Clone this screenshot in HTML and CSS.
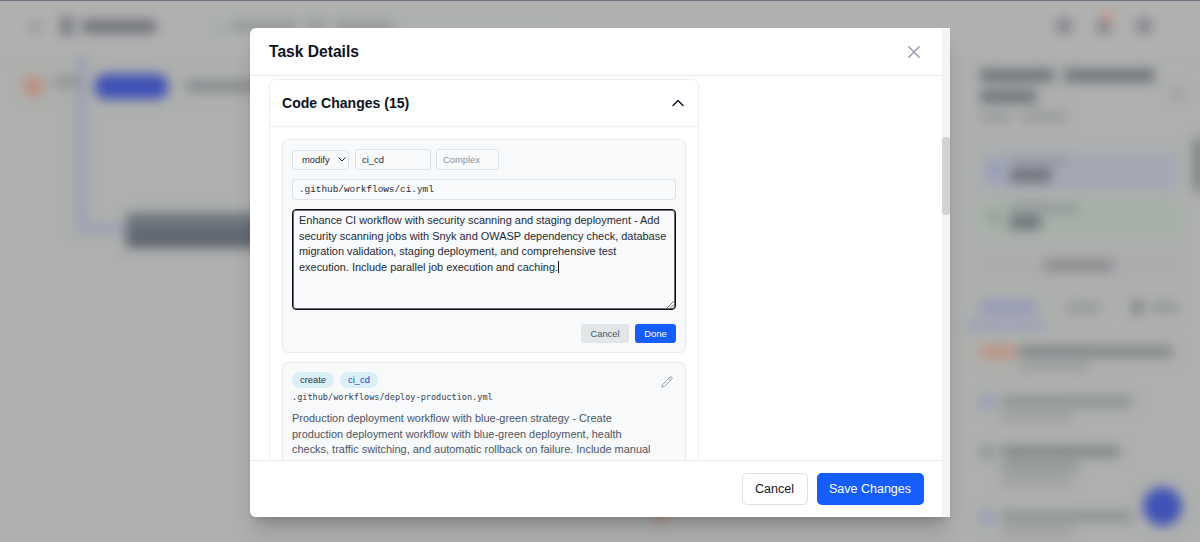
FILE: index.html
```html
<!DOCTYPE html>
<html lang="en">
<head>
<meta charset="utf-8">
<title>Task Details</title>
<link rel="stylesheet" href="styles.css">
</head>
<body>
<div class="screen">
  <div class="app" aria-hidden="true">
    <header class="topbar">
      <i class="bar menu"></i><i class="bar logo"></i><i class="bar wordmark"></i>
      <div class="search"><i class="bar lens"></i><i class="bar q1"></i><i class="bar q2"></i><i class="bar q3"></i></div>
      <div class="top-actions"><i class="bar round"></i><i class="bar bell"><b class="dot"></b></i><i class="bar round"></i></div>
    </header>
    <div class="workspace">
      <div class="canvas">
        <i class="edge edge-v"></i><i class="edge edge-h"></i><i class="node"></i><i class="ember"></i>
        <div class="toolbar"><i class="status"></i><i class="bar tool-a"></i><i class="pill-btn"></i><i class="bar tool-b"></i></div>
      </div>
      <aside class="sidebar">
        <div class="side-head">
          <div class="side-title"><div class="row"><i class="bar t1"></i><i class="bar t2"></i></div><i class="bar t3"></i><div class="row"><i class="bar t4"></i><i class="bar t5"></i></div></div>
          <i class="bar side-x"></i>
        </div>
        <div class="stat blue"><i class="spot"></i><div><i class="bar s1"></i><i class="bar s2"></i></div></div>
        <div class="stat green"><i class="spot"></i><div><i class="bar s3"></i><i class="bar s4"></i></div></div>
        <div class="side-btn"><i class="bar"></i></div>
        <div class="tabs"><i class="tab-on"></i><i class="bar tab-2"></i><i class="bar tab-3"></i><i class="bar tab-4"></i></div>
        <i class="underline"></i>
        <div class="item"><i class="mark orange"></i><div><i class="bar l1 w160"></i><i class="bar l2"></i></div></div>
        <div class="item"><i class="mark indigo"></i><div><i class="bar l1 w120"></i><i class="bar l2"></i></div></div>
        <div class="item tall"><i class="mark moss"></i><div><i class="bar l1 w115"></i><i class="bar l3"></i><i class="bar l2"></i></div></div>
        <div class="item"><i class="mark indigo"></i><div><i class="bar l1 w120"></i><i class="bar l2"></i></div></div>
      </aside>
    </div>
    <i class="side-thumb"></i><i class="fab"></i>
  </div>

  <section class="modal" role="dialog" aria-label="Task Details">
    <div class="main">
      <header class="modal-head">
        <h2>Task Details</h2>
        <svg class="close" viewBox="0 0 12 12"><path d="M.8.8l10.4 10.4M11.2.8L.8 11.2"/></svg>
      </header>
      <div class="modal-body">
        <section class="panel">
          <header class="panel-head">
            <h3>Code Changes (15)</h3>
            <svg class="chevron" viewBox="0 0 12 8"><path d="M1 6.5l5-5 5 5"/></svg>
          </header>
          <div class="changes">
            <article class="change">
              <div class="fields">
                <div class="field select">modify<svg viewBox="0 0 8 5"><path d="M.8.8L4 4 7.2.8"/></svg></div>
                <div class="field kind">ci_cd</div>
                <div class="field complexity">Complex</div>
              </div>
              <div class="field path">.github/workflows/ci.yml</div>
              <div class="textarea">Enhance CI workflow with security scanning and staging deployment - Add<br>security scanning jobs with Snyk and OWASP dependency check, database<br>migration validation, staging deployment, and comprehensive test<br>execution. Include parallel job execution and caching.<span class="caret"></span>
                <svg class="grip" viewBox="0 0 7 7"><path d="M.5 6.5l6-6M3.8 6.5l2.7-2.7"/></svg>
              </div>
              <div class="actions"><button class="small gray">Cancel</button><button class="small primary">Done</button></div>
            </article>
            <article class="change summary">
              <div class="summary-top">
                <div class="tags"><span class="tag">create</span><span class="tag link">ci_cd</span></div>
                <svg class="pencil" viewBox="0 0 24 24"><path d="M16.6 3.6l1.2-1.2a2.7 2.7 0 0 1 3.8 3.8L7.6 20.2a4.5 4.5 0 0 1-1.9 1.1l-4 1.1 1.1-4a4.5 4.5 0 0 1 1.1-1.9L16.6 3.6zm-1.4 1.5l3.7 3.7"/></svg>
              </div>
              <div class="file">.github/workflows/deploy-production.yml</div>
              <p>Production deployment workflow with blue-green strategy - Create<br>production deployment workflow with blue-green deployment, health<br>checks, traffic switching, and automatic rollback on failure. Include manual</p>
            </article>
          </div>
        </section>
      </div>
      <footer class="modal-foot"><button class="large outline">Cancel</button><button class="large primary">Save Changes</button></footer>
    </div>
    <div class="track"><div class="thumb"></div></div>
  </section>
</div>
</body>
</html>
```
FILE: styles.css
```css
* { box-sizing: border-box; }
body { margin: 0; font-family: "Liberation Sans", Arial, sans-serif; }
h2, h3, p { margin: 0; }
i { display: block; flex: none; }
button { font-family: inherit; border: 0; padding: 0; }
svg { display: block; flex: none; fill: none; stroke: currentColor; stroke-linecap: round; stroke-linejoin: round; }

.screen { position: relative; width: 1200px; height: 542px; overflow: hidden; background: #aeb0ae; border-top: 1px solid #6d7480; display: flex; justify-content: center; align-items: flex-start; padding-top: 27px; }

/* Dimmed workspace behind the dialog */
.app { position: absolute; inset: 0; filter: blur(6px); }
.bar { background: #7e8187; border-radius: 4px; }
.topbar { height: 50px; display: flex; align-items: center; padding-left: 29px; background: #b0b0b0; }
.menu { width: 12px; height: 9px; background: #8d9094; }
.logo { width: 14px; height: 20px; margin-left: 19px; background: #7c7f85; }
.wordmark { width: 74px; height: 13px; margin-left: 8px; background: #6e7179; }
.search { width: 355px; height: 30px; margin-left: 49px; padding-left: 12px; display: flex; align-items: center; gap: 8px; background: #adb0b0; }
.search .bar { height: 9px; background: #8f9394; }
.lens { width: 7px; opacity: .5; } .search .q1 { width: 66px; } .q2 { width: 20px; } .q3 { width: 60px; }
.top-actions { display: flex; gap: 26px; margin-left: auto; padding-right: 48px; }
.round { width: 16px; height: 16px; border-radius: 50%; }
.bell { position: relative; width: 12px; height: 16px; }
.dot { position: absolute; left: 5px; top: -7px; width: 11px; height: 11px; border-radius: 50%; background: #cf9a85; }
.workspace { display: flex; justify-content: space-between; }
.canvas { width: 250px; }
.toolbar { position: relative; height: 70px; display: flex; align-items: center; padding-left: 23px; }
.status { width: 21px; height: 21px; border-radius: 50%; background: #b98f7e; }
.tool-a { width: 28px; height: 12px; margin: -9px 0 0 9px; background: #939597; }
.pill-btn { width: 73px; height: 25px; margin-left: 14px; border-radius: 10px; background: #3f50b5; }
.tool-b { width: 75px; height: 12px; margin-left: 18px; background: #888b8e; }
.edge { position: absolute; background: #9b9eb4; }
.edge-v { left: 77px; top: 54px; width: 9px; height: 178px; }
.edge-h { left: 77px; top: 223px; width: 50px; height: 9px; }
.node { position: absolute; left: 126px; top: 212px; width: 160px; height: 35px; border-radius: 4px; background: linear-gradient(#6d747d 45%, #5f6571 55%); }
.ember { position: absolute; left: 655px; top: 511px; width: 10px; height: 10px; background: #b98770; }
.sidebar { width: 245px; padding: 18px 22px 0 25px; }
.side-head { display: flex; justify-content: space-between; height: 83px; }
.row { display: flex; gap: 10px; }
.t1 { width: 74px; height: 13px; } .t2 { width: 91px; height: 13px; } .t3 { width: 57px; height: 13px; margin: 8px 0 9px; }
.t1, .t2, .t3 { background: #70737b; }
.t4 { width: 31px; height: 9px; } .t5 { width: 46px; height: 9px; }
.t4, .t5 { background: #96989b; }
.side-x { width: 9px; height: 11px; margin: 19px -4px 0 0; opacity: .55; }
.stat { display: flex; gap: 10px; height: 38px; margin-bottom: 9px; padding: 6px 10px; border-radius: 6px; }
.blue { background: #a4a8b4; } .green { background: #a5b0a8; }
.spot { width: 10px; height: 10px; margin-top: 7px; border-radius: 50%; background: #868cb8; }
.green .spot { background: #819284; }
.s1, .s3 { width: 58px; height: 7px; background: #91959f; }
.s2, .s4 { width: 42px; height: 13px; margin-top: 4px; background: #6d7179; }
.s3 { width: 68px; background: #8c9194; } .s4 { width: 31px; }
.side-btn { height: 25px; margin-top: 16px; display: grid; place-items: center; border-radius: 5px; background: #abacad; }
.side-btn .bar { width: 70px; height: 11px; background: #87898c; }
.tabs { display: flex; align-items: center; height: 20px; margin-top: 19px; }
.tab-on { width: 56px; height: 15px; background: #979bb7; }
.tab-2 { width: 35px; height: 11px; margin-left: 30px; background: #979a9c; }
.tab-3 { width: 11px; height: 14px; margin-left: 31px; background: #7b7e81; }
.tab-4 { width: 28px; height: 10px; margin-left: 8px; background: #939698; }
.underline { width: 80px; height: 7px; margin: 5px 0 16px -14px; background: #979cbb; }
.item { display: flex; gap: 7px; height: 50px; }
.item.tall { height: 65px; }
.mark { width: 14px; height: 14px; border-radius: 50%; }
.mark.orange { width: 36px; background: #ba9583; border-radius: 6px; }
.mark.indigo { background: #9298bd; } .mark.moss { background: #87928b; }
.orange + div { margin-left: -5px; }
.l1 { height: 11px; margin-top: 1px; }
.w160 { width: 155px; background: #828588; } .w120 { width: 132px; background: #8e9194; } .w115 { width: 119px; background: #828588; }
.l2 { width: 72px; height: 9px; margin-top: 5px; background: #9b9d9e; }
.l3 { width: 78px; height: 9px; margin-top: 5px; background: #8f9295; }
.side-thumb { position: absolute; right: -5px; top: 137px; width: 11px; height: 53px; background: #7b7e82; }
.fab { position: absolute; left: 1143px; top: 486px; width: 39px; height: 39px; border-radius: 50%; background: #4052b6; }

/* Dialog */
.modal { position: relative; width: 700px; height: 489px; display: flex; overflow: hidden; border-radius: 6px 0 0 6px; background: #fff; }
.screen::after { content: ""; position: absolute; left: 250px; top: 27px; width: 700px; height: 489px; border-radius: 6px 0 0 6px; box-shadow: 0 16px 20px -5px rgba(30, 34, 40, .22), 0 6px 8px -4px rgba(30, 34, 40, .16); pointer-events: none; }
.main { flex: 1; min-width: 0; display: flex; flex-direction: column; }
.modal-head { height: 48px; display: flex; justify-content: space-between; align-items: center; padding: 0 22.5px 0 19px; border-bottom: 1px solid #e8eaed; color: #0c1224; }
h2 { font-size: 15.625px; line-height: 20px; }
.close { width: 12px; height: 12px; color: #949aa6; stroke-width: 1.4; }
.modal-body { flex: 1; min-height: 0; overflow: hidden; padding: 3px 19px 0; }
.panel { width: 430px; border: 1px solid #eceef1; border-radius: 6px; height: 420px; }
.panel-head { height: 47px; display: flex; align-items: center; justify-content: space-between; padding: 0 14px 0 12px; border-bottom: 1px solid #eceef1; color: #0c1224; }
h3 { font-size: 14.06px; line-height: 18px; }
.chevron { width: 12px; height: 8px; stroke-width: 1.4; }
.changes { display: flex; flex-direction: column; gap: 9px; padding: 12px; }
.change { height: 214px; padding: 9px; border: 1px solid #e9ecef; border-radius: 6px; background: #f8f9fb; }
.fields { display: flex; align-items: center; gap: 6px; height: 21px; }
.field { height: 21px; display: flex; align-items: center; padding: 0 6px; border: 1px solid #dfe2e6; border-radius: 3px; font-size: 9.375px; color: #1f2937; background: #f9fafb; }
.select { width: 57px; height: 20px; padding: 0 2px 0 9px; justify-content: space-between; }
.select svg { width: 8px; height: 5px; stroke-width: 1; }
.kind { width: 76px; }
.complexity { width: 63px; margin-left: -1px; color: #8d929b; }
.path { height: 21px; margin-top: 9px; font-family: "Liberation Mono", monospace; }
.textarea { position: relative; height: 101px; margin-top: 9px; padding: 3px 6px; border: 1px solid #0c0d12; box-shadow: inset 0 0 0 1px rgba(12, 13, 18, .6); border-radius: 4px; background: #f9fafb; color: #1f2937; font-size: 10.94px; line-height: 15.625px; white-space: nowrap; }
.caret { display: inline-block; width: 1px; height: 12px; vertical-align: -2px; background: #111827; }
.grip { position: absolute; right: 1px; bottom: 1px; width: 7px; height: 7px; stroke-width: .8; color: #555; }
.actions { display: flex; justify-content: flex-end; gap: 6px; margin-top: 14px; }
.small { height: 19px; border-radius: 3px; font-size: 9.375px; }
.gray { width: 48px; background: #e3e6e9; color: #4b5563; }
.primary { background: #155dfc; color: #fff; }
.small.primary { width: 41px; }
.summary-top { display: flex; justify-content: space-between; height: 16px; }
.tags { display: flex; gap: 6px; }
.tag { height: 16px; padding: 0 8px; border-radius: 8px; background: #daf0f6; color: #273238; font-size: 9.375px; line-height: 16px; }
.link { color: #2142c7; }
.pencil { width: 12px; height: 12px; margin: 4px 3px 0; stroke-width: 1.7; color: #858b96; }
.file { margin-top: 3px; font-family: "DejaVu Sans Mono", monospace; font-size: 8.56px; line-height: 12px; color: #374151; }
p { margin-top: 8px; font-size: 10.94px; line-height: 15.625px; color: #4b5563; white-space: nowrap; }
.modal-foot { height: 57px; display: flex; justify-content: flex-end; gap: 9px; padding: 12px 18.5px 0 0; border-top: 1px solid #e8eaed; background: #fff; }
.large { height: 32px; border-radius: 5px; font-size: 12.5px; }
.outline { width: 66px; background: #fff; border: 1px solid #dde1e5; color: #111827; }
.large.primary { width: 107px; }
.track { width: 8px; background: #f3f4f6; padding-top: 109px; }
.thumb { height: 78px; border-radius: 3px; background: #d1d3d7; }
```
